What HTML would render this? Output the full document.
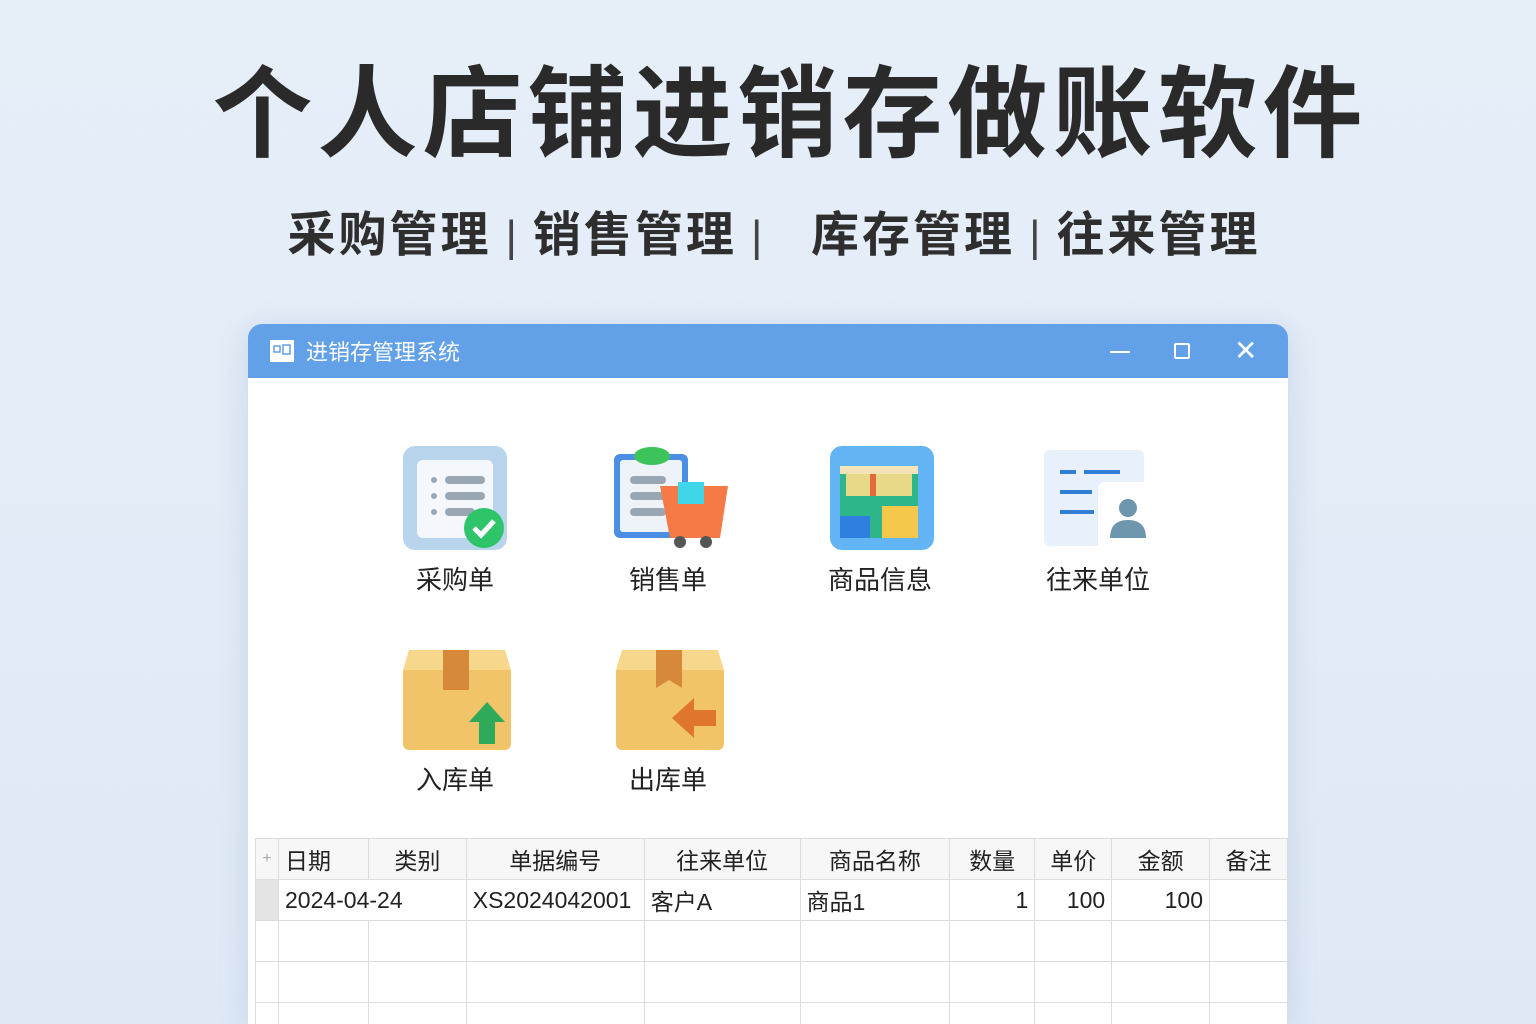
<!DOCTYPE html>
<html><head><meta charset="utf-8"><style>
*{margin:0;padding:0;box-sizing:border-box}
html{width:1536px;height:1024px;overflow:hidden}
body{width:1536px;height:1024px;overflow:hidden;background:linear-gradient(180deg,#e6eef8,#dfe9f6);font-family:"Liberation Sans","Noto Sans CJK SC",sans-serif;position:relative;color:#222}
.h1{position:absolute;top:50px;left:22px;width:1536px;text-align:center;font-size:100px;font-weight:700;color:#2a2a2a;letter-spacing:5px;line-height:130px}
.h2{position:absolute;top:204px;left:6px;width:1536px;text-align:center;font-size:48px;font-weight:700;color:#2e2e2e;line-height:64px;letter-spacing:3px}
.h2 span{font-weight:400;color:#444;font-size:44px;margin:0 16px 0 14px;letter-spacing:0}
.win{position:absolute;left:248px;top:324px;width:1040px;height:700px;background:#fff;border-radius:14px 14px 0 0;box-shadow:0 6px 30px rgba(80,110,160,.18);overflow:hidden}
.tb{height:54px;background:#62a0e8;color:#fff;font-size:22px;display:flex;align-items:center;padding-left:58px;position:relative}
.ic{position:absolute;width:120px;text-align:center;font-size:26px;color:#222}
.ic svg{display:block;margin:0 auto 8px}
table{position:absolute;left:7px;top:514px;border-collapse:collapse;font-size:23px}
td{border:1px solid #dcdcdc;height:41px;padding:0 6px;white-space:nowrap}
tr:first-child td{background:#f7f7f7;text-align:center}
</style></head><body>
<div class="h1">个人店铺进销存做账软件</div>
<div class="h2">采购管理<span>|</span>销售管理<span>|</span>&nbsp; 库存管理<span>|</span>往来管理</div>
<div class="win">
<div class="tb"><svg style="position:absolute;left:22px;top:16px" width="24" height="22"><rect width="24" height="22" fill="#fff"/><path d="M4 6h6v6H4zM13 5h7v9h-7z" stroke="#62a0e8" stroke-width="1.5" fill="none"/></svg>进销存管理系统
<div style="position:absolute;left:862px;top:27px;width:20px;height:2px;background:#fff"></div>
<div style="position:absolute;left:926px;top:19px;width:16px;height:16px;border:2px solid #fff;border-radius:2px"></div>
<div style="position:absolute;left:986px;top:10px;font-size:28px">✕</div>
</div>
<div class="ic" style="left:147px;top:122px"><svg width="108" height="106"><rect x="2" y="0" width="104" height="104" rx="12" fill="#b9d5ee"/><rect x="16" y="14" width="76" height="78" rx="6" fill="#f4f7fb"/><g fill="#9aa6b2"><circle cx="33" cy="34" r="3"/><circle cx="33" cy="50" r="3"/><circle cx="33" cy="66" r="3"/><rect x="44" y="30" width="40" height="8" rx="4"/><rect x="44" y="46" width="40" height="8" rx="4"/><rect x="44" y="62" width="30" height="8" rx="4"/></g><circle cx="83" cy="82" r="20" fill="#2ec46a"/><path d="M73 82l7 7 13-14" stroke="#fff" stroke-width="5" fill="none"/></svg>采购单</div>
<div class="ic" style="left:360px;top:118px"><svg width="120" height="110"><rect x="6" y="12" width="74" height="84" rx="6" fill="#4b8fe4"/><rect x="12" y="18" width="62" height="72" rx="3" fill="#eef3f9"/><ellipse cx="44" cy="14" rx="18" ry="9" fill="#3cc45a"/><g fill="#9aa6b2"><rect x="22" y="34" width="36" height="8" rx="4"/><rect x="22" y="50" width="36" height="8" rx="4"/><rect x="22" y="66" width="36" height="8" rx="4"/></g><path d="M52 44h68l-8 52H62z" fill="#f57a45"/><rect x="70" y="40" width="26" height="22" fill="#3fd6e8"/><circle cx="72" cy="100" r="6" fill="#555"/><circle cx="98" cy="100" r="6" fill="#555"/></svg>销售单</div>
<div class="ic" style="left:572px;top:122px"><svg width="108" height="106"><rect x="4" y="0" width="104" height="104" rx="12" fill="#62b4f4"/><rect x="14" y="20" width="78" height="72" fill="#2cb68a"/><rect x="14" y="20" width="78" height="8" fill="#f4e2b8"/><rect x="20" y="28" width="66" height="22" fill="#e8d88a"/><rect x="44" y="28" width="6" height="22" fill="#e06a3a"/><rect x="14" y="70" width="30" height="22" fill="#2f7fe0"/><rect x="56" y="60" width="36" height="32" fill="#f4c84a"/></svg>商品信息</div>
<div class="ic" style="left:790px;top:122px"><svg width="120" height="106"><rect x="6" y="4" width="100" height="96" rx="6" fill="#e8f1fb"/><g fill="#2f7fd6"><rect x="22" y="24" width="16" height="4"/><rect x="46" y="24" width="36" height="4"/><rect x="22" y="44" width="32" height="4"/><rect x="22" y="64" width="34" height="4"/></g><rect x="60" y="36" width="60" height="68" rx="6" fill="#fff"/><circle cx="90" cy="62" r="9" fill="#6e97ad"/><path d="M72 92q0-18 18-18t18 18z" fill="#6e97ad"/></svg>往来单位</div>
<div class="ic" style="left:147px;top:322px"><svg width="112" height="106"><rect x="4" y="20" width="108" height="84" rx="6" fill="#f2c46a"/><path d="M10 4h96l6 20H4z" fill="#f7d78c"/><rect x="44" y="4" width="26" height="40" fill="#d6893a"/><path d="M88 56l18 20h-10v22H80V76H70z" fill="#2eaa5a"/></svg>入库单</div>
<div class="ic" style="left:360px;top:322px"><svg width="112" height="106"><rect x="4" y="20" width="108" height="84" rx="6" fill="#f2c46a"/><path d="M10 4h96l6 20H4z" fill="#f7d78c"/><path d="M44 4h26v38l-13-8-13 8z" fill="#d6893a"/><path d="M60 72l22-20v12h22v16H82v12z" fill="#e0762e"/></svg>出库单</div>
<table>
<tr><td style="width:23px;color:#aaa;font-size:16px">+</td><td style="width:90px;text-align:left">日期</td><td style="width:98px">类别</td><td style="width:178px">单据编号</td><td style="width:156px">往来单位</td><td style="width:150px">商品名称</td><td style="width:85px">数量</td><td style="width:77px">单价</td><td style="width:98px">金额</td><td style="width:78px">备注</td></tr>
<tr><td style="background:#e4e4e4"></td><td colspan="2">2024-04-24</td><td>XS2024042001</td><td>客户A</td><td>商品1</td><td style="text-align:right">1</td><td style="text-align:right">100</td><td style="text-align:right">100</td><td></td></tr>
<tr><td></td><td></td><td></td><td></td><td></td><td></td><td></td><td></td><td></td><td></td></tr>
<tr><td></td><td></td><td></td><td></td><td></td><td></td><td></td><td></td><td></td><td></td></tr>
<tr><td></td><td></td><td></td><td></td><td></td><td></td><td></td><td></td><td></td><td></td></tr>
</table>
</div>
</body></html>
